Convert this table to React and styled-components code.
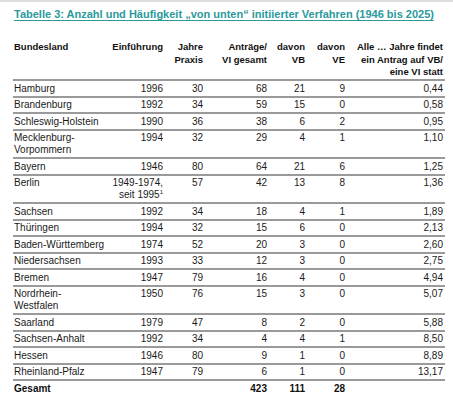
import React from "react";
import styled, { createGlobalStyle } from "styled-components";

const Global = createGlobalStyle`
  html, body { margin: 0; padding: 0; background: #fff; }
  body { font-family: "Liberation Sans", Arial, sans-serif; color: #1a1a1a; }
`;

const Page = styled.div`
  border-top: 2px solid #dedede;
  padding: 5px 8px 0 13px;
  width: 453px;
  box-sizing: border-box;
`;

const Title = styled.h1`
  margin: 0 0 20px 1px;
  font-size: 11px;
  line-height: 14px;
  font-weight: 700;
  color: #2a9a9c;
  text-decoration: underline;
  text-decoration-thickness: 1px;
  text-underline-offset: 2px;
  white-space: nowrap;
`;

const cols = "90px 60px 40px 64px 38px 40px 98px";

const Row = styled.div`
  display: grid;
  grid-template-columns: ${cols};
  padding: ${(p) => (p.$head ? "0 0 0.5px" : "1.5px 0 1px")};
  border-bottom: ${(p) => (p.$last ? "none" : "2px solid #9a9a9a")};
  font-size: ${(p) => (p.$head ? "9.5px" : "10px")};
  line-height: ${(p) => (p.$head ? "12.5px" : "12px")};
  font-weight: ${(p) => (p.$bold ? 700 : 400)};
  color: ${(p) => (p.$bold ? "#111" : "#1a1a1a")};
`;

const Cell = styled.div`
  text-align: ${(p) => (p.$left ? "left" : "right")};
  padding-left: ${(p) => (p.$left ? "1px" : "0")};
  white-space: nowrap;
`;

const Sup = styled.sup`
  font-size: 6px;
  line-height: 0;
  vertical-align: 4px;
`;

const data = [
  ["Hamburg", "1996", "30", "68", "21", "9", "0,44"],
  ["Brandenburg", "1992", "34", "59", "15", "0", "0,58"],
  ["Schleswig-Holstein", "1990", "36", "38", "6", "2", "0,95"],
  [["Mecklenburg-", "Vorpommern"], "1994", "32", "29", "4", "1", "1,10"],
  ["Bayern", "1946", "80", "64", "21", "6", "1,25"],
  ["Berlin", "berlin", "57", "42", "13", "8", "1,36"],
  ["Sachsen", "1992", "34", "18", "4", "1", "1,89"],
  ["Thüringen", "1994", "32", "15", "6", "0", "2,13"],
  ["Baden-Württemberg", "1974", "52", "20", "3", "0", "2,60"],
  ["Niedersachsen", "1993", "33", "12", "3", "0", "2,75"],
  ["Bremen", "1947", "79", "16", "4", "0", "4,94"],
  [["Nordrhein-", "Westfalen"], "1950", "76", "15", "3", "0", "5,07"],
  ["Saarland", "1979", "47", "8", "2", "0", "5,88"],
  ["Sachsen-Anhalt", "1992", "34", "4", "4", "1", "8,50"],
  ["Hessen", "1946", "80", "9", "1", "0", "8,89"],
  ["Rheinland-Pfalz", "1947", "79", "6", "1", "0", "13,17"],
];

function renderName(n) {
  if (Array.isArray(n)) {
    return (
      <>
        {n[0]}
        <br />
        {n[1]}
      </>
    );
  }
  return n;
}

export default function App() {
  return (
    <Page>
      <Global />
      <Title>Tabelle 3: Anzahl und Häufigkeit „von unten“ initiierter Verfahren (1946 bis 2025)</Title>
      <Row $head $bold>
        <Cell $left>Bundesland</Cell>
        <Cell>Einführung</Cell>
        <Cell>
          Jahre
          <br />
          Praxis
        </Cell>
        <Cell>
          Anträge/
          <br />
          VI gesamt
        </Cell>
        <Cell>
          davon
          <br />
          VB
        </Cell>
        <Cell>
          davon
          <br />
          VE
        </Cell>
        <Cell>
          Alle … Jahre findet
          <br />
          ein Antrag auf VB/
          <br />
          eine VI statt
        </Cell>
      </Row>
      {data.map((r, i) => (
        <Row key={i}>
          <Cell $left>{renderName(r[0])}</Cell>
          <Cell>
            {r[1] === "berlin" ? (
              <>
                1949-1974,
                <br />
                seit 1995<Sup>1</Sup>
              </>
            ) : (
              r[1]
            )}
          </Cell>
          <Cell>{r[2]}</Cell>
          <Cell>{r[3]}</Cell>
          <Cell>{r[4]}</Cell>
          <Cell>{r[5]}</Cell>
          <Cell>{r[6]}</Cell>
        </Row>
      ))}
      <Row $bold $last>
        <Cell $left>Gesamt</Cell>
        <Cell />
        <Cell />
        <Cell>423</Cell>
        <Cell>111</Cell>
        <Cell>28</Cell>
        <Cell />
      </Row>
    </Page>
  );
}
